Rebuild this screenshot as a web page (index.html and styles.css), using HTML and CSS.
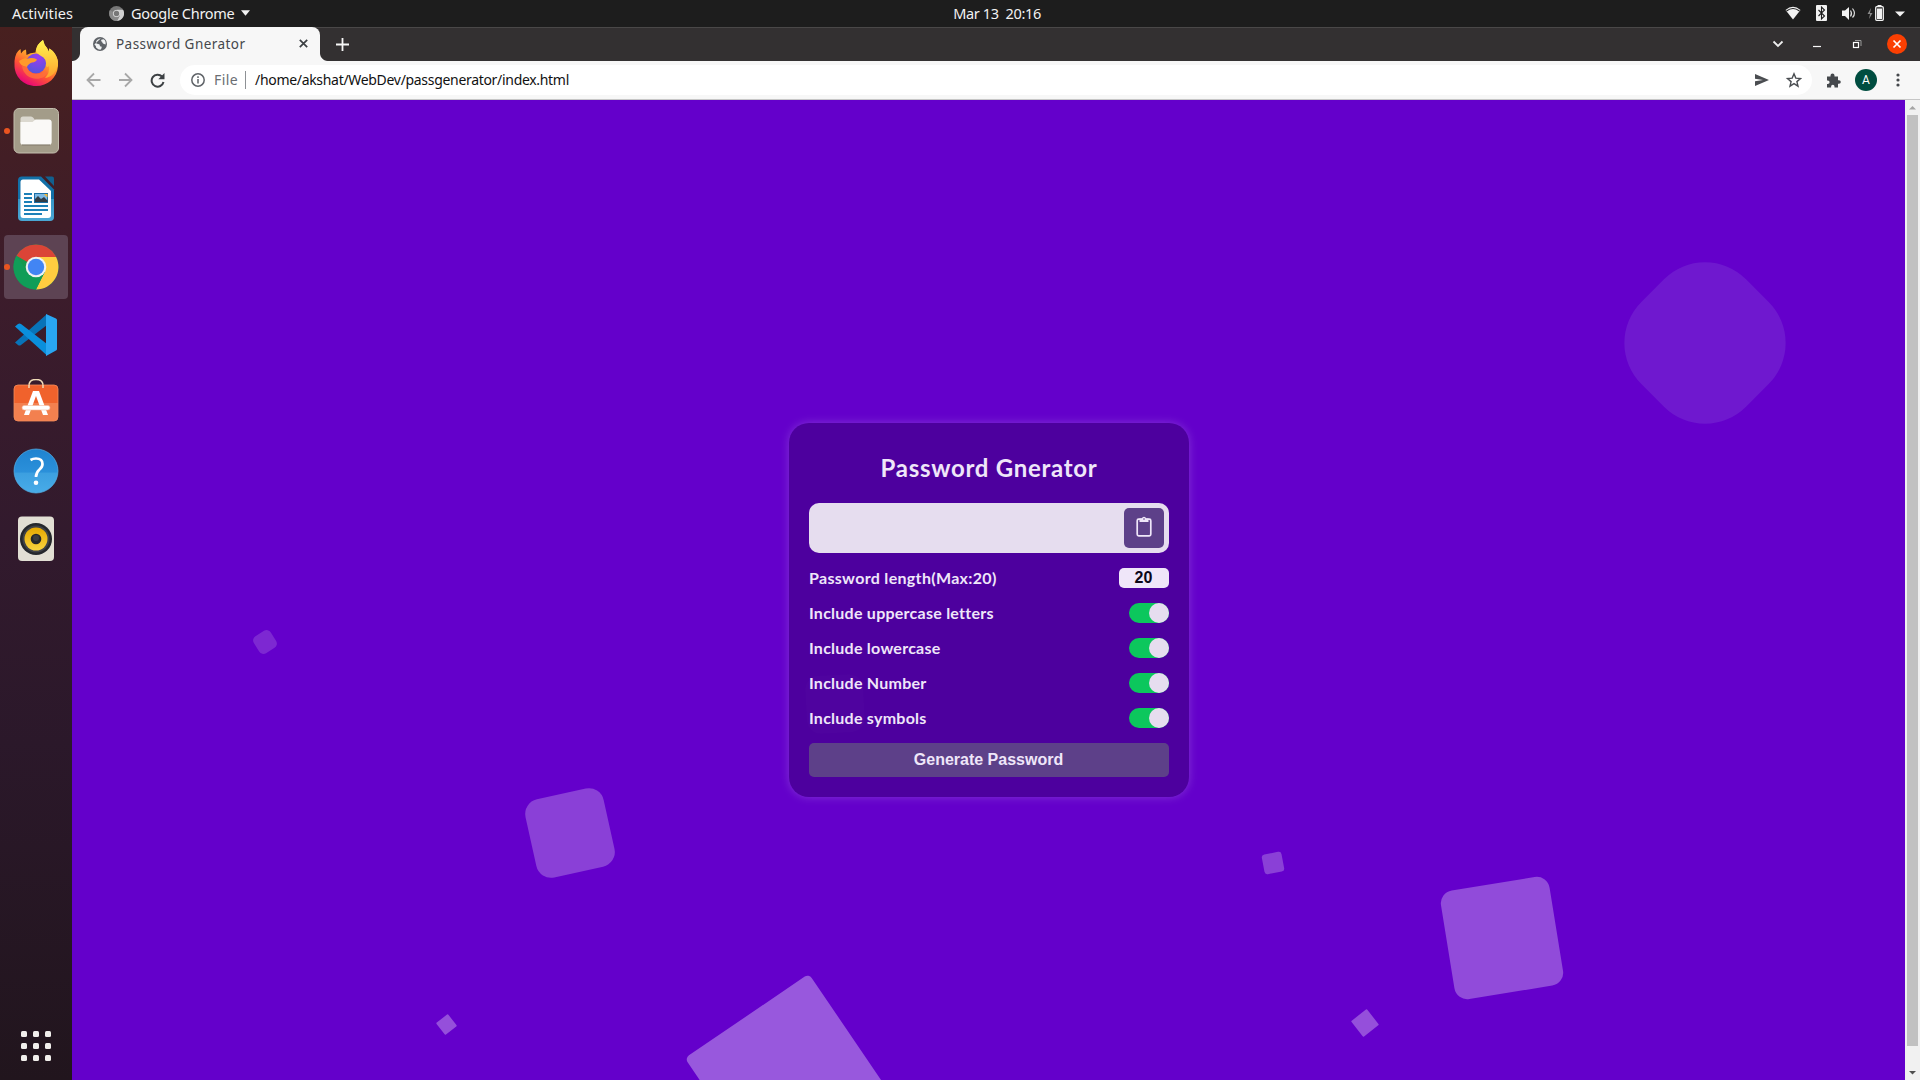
FILE: index.html
```html
<!DOCTYPE html>
<html lang="en">
<head>
<meta charset="utf-8">
<title>Password Gnerator</title>
<link rel="stylesheet" href="styles.css">
</head>
<body>
<header class="topbar">
  <div class="top-left">
    <span class="t-activities">Activities</span>
    <span class="app-menu">
      <svg width="15" height="15" viewBox="0 0 16 16"><circle cx="8" cy="8" r="8" fill="#777"/><path d="M8 4h7A8 8 0 0 1 8.500 16L11.500 10z" fill="#d0d0d0"/><path d="M1 4.500A8 8 0 0 0 8.500 16l3-5.500z" fill="#8a8a8a"/><circle cx="8" cy="8" r="3.800" fill="#ddd"/><circle cx="8" cy="8" r="2.900" fill="#777"/></svg>
      <span class="t-app">Google Chrome</span>
      <svg width="9" height="6" viewBox="0 0 10 6"><path d="M0 0h10L5 6z" fill="#f2f2f2"/></svg>
    </span>
  </div>
  <span class="t-clock">Mar 13&nbsp; 20:16</span>
  <div class="tray">
    <svg width="122" height="20" viewBox="0 0 122 20">
      <path d="M0.500 7Q8 .500 15.500 7L8 16.500z" fill="#f2f2f2"/><path d="M1.500 8Q8 3 14.500 8" fill="none" stroke="#1d1d1d" stroke-width="1.100"/>
      <rect x="31" y="2" width="11" height="16" rx="1" fill="#f2f2f2"/><path d="M33.500 7l6 6-3 3V4l3 3-6 6" fill="none" stroke="#1d1d1d" stroke-width="1.100"/>
      <path d="M57 7.500h3L64 4v13l-4-4h-3z" fill="#f2f2f2"/><path d="M65.500 7.500q2 3 0 6M67.500 5.500q4 5 0 9" fill="none" stroke="#ddd" stroke-width="1.200"/>
      <path d="M86 5l-3.500 6h2.500l-1 5 3.500-6h-2.500z" fill="#888"/>
      <rect x="90.700" y="3.700" width="7.600" height="13.600" rx="1" fill="none" stroke="#f2f2f2" stroke-width="1.300"/><path d="M92.500 2h4v1.500h-4z" fill="#f2f2f2"/><rect x="92" y="5.500" width="5" height="10.500" fill="#f2f2f2"/>
      <path d="M110 8.500h10l-5 5z" fill="#f2f2f2"/>
    </svg>
  </div>
</header>
<div class="desktop">
  <nav class="dock">
    <div class="slot"><svg viewBox="0 0 48 48">
      <defs>
        <linearGradient id="ffa" x1=".8" y1=".1" x2=".3" y2="1"><stop offset="0" stop-color="#fff44f"/><stop offset=".35" stop-color="#ffb02a"/><stop offset=".65" stop-color="#ff5634"/><stop offset="1" stop-color="#e6007c"/></linearGradient>
        <radialGradient id="ffb" cx=".6" cy=".2" r=".9"><stop offset="0" stop-color="#9b3cf0"/><stop offset="1" stop-color="#4b59d8"/></radialGradient>
        <linearGradient id="ffc" x1="0" y1="0" x2="0" y2="1"><stop offset="0" stop-color="#fff44f"/><stop offset="1" stop-color="#ffa22d"/></linearGradient>
      </defs>
      <path d="M2.500 22C3 16 5 12 8.500 10L9 14.500Q11 11 14 10.500L14.500 16Q18 13.500 23.500 13.500C24 8 27 4 31 1Q32 6 35 9L37 13V9.500C42 12 45 17 46 23V27C45 39 36 47 24 47S2 38 2.500 25z" fill="url(#ffa)"/>
      <circle cx="24" cy="24.500" r="10" fill="url(#ffb)"/>
      <path d="M31 1Q32 6 35 9L37 13V9.500C42 12 45 17 46 23C45 33 40 38 33 39Q38 34 37 27Q35 29 34 27Q35 19 29 17Q24 14 24 11Q25 5 31 1z" fill="url(#ffc)"/>
      <path d="M7 22Q13 18 15 20Q20 18 25 20.500Q24 23 20 23.500Q16 25 15 28Q8 27 7 22z" fill="#ff9a2b"/>
      <path d="M15 28C17 36 29 37 33 31Q37 34 32 38C22 43 11 37 10 27z" fill="#ff7139" opacity=".8"/>
    </svg></div>
    <div class="slot running"><svg viewBox="0 0 48 48">
      <rect x="2" y="1.500" width="44.500" height="44.500" rx="5" fill="#a39c89" stroke="#c4beae"/>
      <path d="M8.500 12q0-2.500 2.500-2.500h8q1.500 0 2.500 1.500l1.500 2H37q2.500 0 2.500 2.500v20q0 2.500-2.500 2.500H11q-2.500 0-2.500-2.500z" fill="#dbd8cf"/>
      <path d="M8.500 15h12l3-2.500H37q2.500 0 2.500 2.500v20q0 2.500-2.500 2.500H11q-2.500 0-2.500-2.500z" fill="#faf9f7"/><path d="M10 38h28" stroke="#81796a"/>
    </svg></div>
    <div class="slot"><svg viewBox="0 0 48 48">
      <defs><linearGradient id="wr" x1="0" y1="0" x2="0" y2="1"><stop offset=".5" stop-color="#1270a8"/><stop offset=".5" stop-color="#3595c6"/><stop offset="1" stop-color="#4aa7d4"/></linearGradient></defs>
      <path d="M10 1.500H29L42 14.500V42q0 4-4 4H10q-4 0-4-4V5.500q0-4 4-4z" fill="url(#wr)"/><path d="M33 1.500H40q2 0 2 2V11z" fill="#12608f"/>
      <path d="M11 4.500H27L39 16V40q0 3-3 3H11q-2.500 0-2.500-3V7q0-2.500 2.500-2.500z" fill="#fff"/>
      <path d="M12 19h8M12 23h8M12 27h8M12 31h24M12 35h24M12 39h18" stroke="#1c80b8" stroke-width="2"/>
      <rect x="22.500" y="18.500" width="13" height="9" fill="#7cb9e4" stroke="#1c6fa5"/><path d="M23 27v-3l3-3 3 3 3-2 3.500 3.500V27z" fill="#333d46"/><path d="M32 19h3.500v3.500z" fill="#f6b733"/>
    </svg></div>
    <div class="slot running active"><svg viewBox="0 0 48 48">
      <circle cx="24" cy="24" r="22.500" fill="#14994e"/>
      <path d="M24 24L4.500 12.800A22.500 22.500 0 0 1 43.500 12.800L44 14H24z" fill="#db4437"/>
      <path d="M24 14h20.100A22.500 22.500 0 0 1 24 46.500L32.700 29z" fill="#ffcd40"/>
      <path d="M4.500 12.800A22.500 22.500 0 0 0 24 46.500L32.700 29 15.300 29z" fill="#109d58"/>
      <circle cx="24" cy="24" r="10.300" fill="#f1f1f1"/><circle cx="24" cy="24" r="8.200" fill="#4285f4"/>
    </svg></div>
    <div class="slot"><svg viewBox="0 0 48 48">
      <path d="M3 31.500L6 34q1.500 1 3 0L35 14V3z" fill="#0873b8"/>
      <path d="M3 15.500L6 13q1.500-1 3 0L35 33V44.500z" fill="#0a8fdc"/>
      <path d="M34 3l10 4.500q1 .500 1 1.500v29q0 1-1 1.500L34 45z" fill="#29a6f2"/>
    </svg></div>
    <div class="slot"><svg viewBox="0 0 48 48">
      <defs><linearGradient id="sw" x1="0" y1="0" x2="0" y2="1"><stop offset=".5" stop-color="#f0622c"/><stop offset=".5" stop-color="#f3804f"/></linearGradient></defs>
      <path d="M17 9V6.500q0-6 7-6t7 6V9" fill="none" stroke="#f0dcb8" stroke-width="1.500"/>
      <rect x="2" y="6" width="44" height="36" rx="4" fill="url(#sw)" stroke="#f58d5c" stroke-width=".8"/>
      <path d="M17 9V6" stroke="#f0dcb8" stroke-width="1.500"/><path d="M31 9V6" stroke="#f0dcb8" stroke-width="1.500"/>
      <path d="M21 12h6l9 24h-5l-7-19-7 19h-5z" fill="#fff"/><rect x="10" y="26.500" width="28" height="4.500" rx="2.200" fill="#fff" stroke="#f3b69b" stroke-width=".6"/>
    </svg></div>
    <div class="slot"><svg viewBox="0 0 48 48">
      <defs><linearGradient id="hp" x1="0" y1="0" x2="0" y2="1"><stop offset="0" stop-color="#1f83d0"/><stop offset=".53" stop-color="#2b90da"/><stop offset=".54" stop-color="#3c9fe0"/><stop offset="1" stop-color="#48ace8"/></linearGradient></defs>
      <circle cx="24" cy="24" r="22" fill="url(#hp)" stroke="#55b2ea" stroke-width=".7"/>
      <path d="M18.500 13Q21 11.500 24 11.500Q30.500 11.500 30.500 17Q30.500 20 27.500 22.500Q24 25.500 24 30" fill="none" stroke="#fff" stroke-width="2.700"/><circle cx="24" cy="35.700" r="2.300" fill="#fff"/>
    </svg></div>
    <div class="slot"><svg viewBox="0 0 48 48">
      <defs><linearGradient id="rb" x1="0" y1="0" x2="0" y2="1"><stop offset="0" stop-color="#e5a800"/><stop offset="1" stop-color="#f8d33e"/></linearGradient></defs>
      <rect x="6" y="1.500" width="36" height="44.500" rx="4" fill="#e2dfd4"/>
      <circle cx="24" cy="24" r="16" fill="#25282c"/><circle cx="24" cy="24" r="13.500" fill="#3f4247"/><circle cx="24" cy="24" r="11.500" fill="url(#rb)"/><circle cx="24" cy="24" r="5.300" fill="#26282a"/><circle cx="24" cy="23" r="3" fill="#3b3d40"/>
    </svg></div>
    <div class="apps"><i></i><i></i><i></i><i></i><i></i><i></i><i></i><i></i><i></i></div>
  </nav>
  <main class="window">
    <div class="tabstrip">
      <div class="tab">
        <svg class="globe" width="14" height="14" viewBox="0 0 16 16"><circle cx="8" cy="8" r="8" fill="#5f6368"/><path d="M9 1.500Q4 3 3.500 5.500 3 8 6 8q2 0 2 2.500l2 .5q0 2-1.500 3.500Q6 14.500 3.500 12 4 10 1.600 8.500 M9.500 3Q8.500 5 10.500 5.500q0 2.500 3.900 3Q15 4 12 2.500z" fill="#f1f3f4"/></svg>
        <span class="t-tab">Password Gnerator</span>
        <svg class="tab-x" width="9" height="9" viewBox="0 0 9 9"><path d="M.8.800l7.400 7.400M8.200.800L.8 8.200" stroke="#3c4043" stroke-width="1.700"/></svg>
      </div>
      <svg class="plus" width="13" height="13" viewBox="0 0 13 13"><path d="M6.500 0v13M0 6.500h13" stroke="#f7f7f7" stroke-width="1.800"/></svg>
      <div class="wincontrols">
        <svg width="140" height="24" viewBox="0 0 140 24">
          <path d="M4.500 9.500l4.500 4.500 4.500-4.500" fill="none" stroke="#eee" stroke-width="1.800"/>
          <path d="M44 14.500h8" stroke="#f7f7f7" stroke-width="1.200"/>
          <rect x="84.500" y="10.500" width="5" height="5" fill="none" stroke="#fff" stroke-width="1.200"/><path d="M86 8.500h6V14" fill="none" stroke="#9b9b9b"/>
          <circle cx="128" cy="12" r="10" fill="#fb3f02"/><path d="M124.500 8.500l7 7M131.500 8.500l-7 7" stroke="#fff" stroke-width="1.700"/>
        </svg>
      </div>
    </div>
    <div class="toolbar">
      <svg class="navs" width="80" height="16" viewBox="0 0 80 16"><g fill="none" stroke="#a8a8a8" stroke-width="1.800"><path d="M14.500 8H2M8 1.500L1.500 8 8 14.500"/><path d="M33 8h12.500M39 1.500L45.500 8 39 14.500"/></g><path d="M76 4.500A6 6 0 1 0 77.500 10" fill="none" stroke="#3c4043" stroke-width="2"/><path d="M78.500 1v6.200h-6.200z" fill="#3c4043"/></svg>
      <div class="omnibox">
        <svg width="14" height="14" viewBox="0 0 14 14"><circle cx="7" cy="7" r="6.200" fill="none" stroke="#5f6368" stroke-width="1.500"/><path d="M7 6v4.500M7 3.300v1.600" stroke="#5f6368" stroke-width="1.500"/></svg>
        <span class="t-file">File</span><i class="sep"></i><span class="t-url">/home/akshat/WebDev/passgenerator/index.html</span>
        <svg class="omni-icons" width="48" height="16" viewBox="0 0 48 16"><path d="M1 2l14 6-14 6V9.200L9 8 1 6.800z" fill="#4a4d51"/><path d="M40 1.800l1.800 4.300 4.700.4-3.600 3.100 1.100 4.600-4-2.500-4 2.500 1.100-4.600-3.600-3.100 4.700-.4z" fill="none" stroke="#4a4d51" stroke-width="1.400"/></svg>
      </div>
      <svg class="ext" width="15" height="15" viewBox="0 0 15 15"><path d="M1 3.500h3.500v-1a2 2 0 0 1 4 0v1H12v3.700h1a1.800 1.800 0 0 1 0 3.600h-1V14.500H8.500v-1a1.700 1.700 0 0 0-3.400 0v1H1V11h.8a1.800 1.800 0 0 0 0-3.600H1z" fill="#45484c"/></svg>
      <span class="avatar">A</span>
      <svg class="dots" width="4" height="14" viewBox="0 0 4 14"><g fill="#45484c"><circle cx="2" cy="2" r="1.600"/><circle cx="2" cy="7" r="1.600"/><circle cx="2" cy="12" r="1.600"/></g></svg>
    </div>
    <div class="viewport">
      <div class="page">
        <i class="sq s1"></i><i class="sq s2"></i><i class="sq s3"></i><i class="sq s4"></i><i class="sq s5"></i><i class="sq s6"></i><i class="sq s7"></i><i class="sq s8"></i>
        <section class="card">
          <h1><span>Password Gnerator</span></h1>
          <div class="display"><button class="copy"><svg width="16" height="21" viewBox="0 0 16 21"><rect x="1.200" y="3.200" width="13.600" height="16.600" rx="1.500" fill="none" stroke="#efe6f9" stroke-width="1.700"/><path d="M3.500 2.500h2.300a2.300 2.300 0 0 1 4.400 0h2.300V6h-9z" fill="#efe6f9"/><circle cx="8" cy="3" r=".8" fill="#5d4089"/></svg></button></div>
          <div class="row"><span class="l1">Password length(Max:20)</span><span class="num">20</span></div>
          <div class="row"><span>Include uppercase letters</span><i class="toggle"></i></div>
          <div class="row"><span>Include lowercase</span><i class="toggle"></i></div>
          <div class="row"><span>Include Number</span><i class="toggle"></i></div>
          <div class="row"><span>Include symbols</span><i class="toggle"></i></div>
          <button class="generate">Generate Password</button>
          <i class="sq s9"></i>
        </section>
      </div>
      <div class="scrollbar">
        <svg width="15" height="15" viewBox="0 0 15 15"><path d="M4 9.500h7L7.500 6z" fill="#a3a3a3"/></svg>
        <i class="thumb"></i>
        <svg width="15" height="15" viewBox="0 0 15 15"><path d="M4 6h7L7.500 9.500z" fill="#505050"/></svg>
      </div>
    </div>
  </main>
</div>
</body>
</html>
```
FILE: styles.css
```css
* { box-sizing: border-box; }
body { margin: 0; width: 1920px; height: 1080px; overflow: hidden; display: flex; flex-direction: column; font-family: "Noto Sans", "Open Sans", sans-serif; }
svg { display: block; flex: none; }
i { display: block; flex: none; }

.topbar { height: 27px; flex: none; background: #1d1d1d; color: #f2f2f2; display: grid; grid-template-columns: 1fr auto 1fr; align-items: center; font-size: 14.5px; line-height: 25px; padding: 0 13px 1px 12px; white-space: nowrap; }
.top-left { display: flex; gap: 35px; }
.t-activities { width: 62px; letter-spacing: .05px; }
.app-menu { display: flex; align-items: center; gap: 7px; }
.t-app { width: 103px; letter-spacing: -.27px; }
.t-clock { letter-spacing: -.35px; margin-left: 75px; }
.tray { display: flex; justify-content: flex-end; }

.desktop { flex: 1; display: flex; min-height: 0; }
.dock { width: 72px; flex: none; padding-top: 2px; background: linear-gradient(#48201f, #3c1c2b 25%, #321a2d 48%, #2b182a 68%, #21151d); display: flex; flex-direction: column; align-items: center; }
.slot { width: 64px; height: 64px; margin: 2px 0; border-radius: 4px; display: flex; align-items: center; justify-content: center; position: relative; flex: none; }
.slot svg { width: 48px; height: 48px; }
.active { background: #5d4353; }
.running::before { content: ""; position: absolute; left: 0; top: 29px; width: 6px; height: 6px; border-radius: 50%; background: #e95420; }
.apps { margin-top: auto; margin-bottom: 19px; display: grid; grid-template-columns: repeat(3, 6px); gap: 6px; }
.apps i { width: 6px; height: 6px; border-radius: 1.5px; background: #f1efec; }

.window { flex: 1; display: flex; flex-direction: column; min-width: 0; }
.tabstrip { height: 34px; flex: none; background: #333031; border-top: 1px solid #4a4848; display: flex; align-items: center; padding: 0 12px 1px 8px; }
.tab { width: 240px; height: 34px; background: #f7f7f7; border-radius: 8px 8px 0 0; display: flex; align-items: center; padding: 0 12px 1px 13px; position: relative; }
.tab::before, .tab::after { content: ""; position: absolute; bottom: 0; width: 8px; height: 8px; }
.tab::before { left: -8px; background: radial-gradient(circle at 0 0, #333031 7.5px, #f7f7f7 8.5px); }
.tab::after { right: -8px; background: radial-gradient(circle at 100% 0, #333031 7.500px, #f7f7f7 8.500px); }
.t-tab { flex: 1; margin-left: 9px; font-size: 13.5px; color: #45484c; white-space: nowrap; letter-spacing: .45px; }
.plus { margin-left: 16px; }
.wincontrols { margin-left: auto; margin-right: -1px; }
.toolbar { height: 39px; flex: none; background: #f7f7f7; border-bottom: 1px solid #c6c6c6; display: flex; align-items: center; }
.navs { margin-left: 14px; }
.omnibox { width: 1632px; height: 30px; margin-left: 14px; background: #fff; border-radius: 15px; display: flex; align-items: center; padding: 0 10px 0 11px; font-size: 14px; line-height: 28px; white-space: nowrap; }
.t-file { margin-left: 9px; width: 24px; color: #6b6e73; letter-spacing: .4px; }
.sep { width: 1px; height: 18px; margin: 0 9px 0 7px; background: #8e9195; }
.t-url { color: #111; letter-spacing: -.31px; }
.omni-icons { margin-left: auto; }
.ext { margin-left: 14px; }
.avatar { width: 22px; height: 22px; margin-left: 14px; border-radius: 50%; background: #004d40; color: #fff; font: 12px/22px Roboto, sans-serif; text-align: center; }
.dots { margin-left: 19px; }

.viewport { flex: 1; display: flex; min-height: 0; }
.page { flex: 1; background: #6400cb; position: relative; overflow: hidden; display: flex; justify-content: center; align-items: flex-start; padding-top: 323px; }
.scrollbar { width: 15px; background: #f1f1f1; display: flex; flex-direction: column; align-items: center; }
.thumb { width: 11px; height: 931px; background: #c1c1c1; margin-bottom: auto; }

.sq { position: absolute; width: var(--s); height: var(--s); left: calc(var(--x) - var(--s) / 2); top: calc(var(--y) - var(--s) / 2); border-radius: var(--r); transform: rotate(var(--a)); }
.s1 { --s: 80px; --x: 498px; --y: 732.8px; --r: 15px; --a: -12.5deg; background: #8a40d7; }
.s2 { --s: 150px; --x: 717px; --y: 978px; --r: 5px; --a: -34.2deg; background: #9858dd; }
.s3 { --s: 20px; --x: 1201px; --y: 762.6px; --r: 3px; --a: -10.7deg; background: #8a40d7; }
.s4 { --s: 110px; --x: 1430.2px; --y: 837.5px; --r: 13px; --a: -9.2deg; background: #914bda; }
.s5 { --s: 20px; --x: 1293px; --y: 922.7px; --r: 1px; --a: -38deg; background: #954fdb; }
.s6 { --s: 15px; --x: 374.7px; --y: 924.3px; --r: 1px; --a: -38deg; background: #954fdb; }
.s7 { --s: 20px; --x: 193px; --y: 542.3px; --r: 5px; --a: -32deg; background: #7d28d2; }
.s8 { --s: 148px; --x: 1633px; --y: 243px; --r: 58px; --a: 45deg; background: #6f18cf; }
.s9 { --s: 58px; --x: 45.500px; --y: 280.500px; --r: 14px; --a: -3deg; background: rgba(255,255,255,.012); }

.card { width: 400px; height: 374px; padding: 20px; border-radius: 20px; background: #4d009e; color: #efe6f9; box-shadow: 0 0 10px rgba(255,255,255,.2); position: relative; margin-left: 1px; font-family: Lato, sans-serif; display: flex; flex-direction: column; }
h1 { margin: 0; height: 60px; padding-top: 10px; font-size: 24px; line-height: 30px; font-weight: 700; letter-spacing: .72px; text-align: center; }
.display { height: 50px; flex: none; background: #e6ddef; border-radius: 10px; padding: 5px; display: flex; justify-content: flex-end; margin-bottom: 7px; }
button { border: 0; border-radius: 5px; background: #5d4089; padding: 0; display: flex; justify-content: center; }
.copy { width: 40px; height: 40px; padding-top: 8px; padding-right: 1px; }
.row { height: 35px; display: flex; align-items: center; justify-content: space-between; font-size: 16px; font-weight: 700; letter-spacing: .25px; white-space: nowrap; }
.l1 { letter-spacing: .32px; }
.num { width: 50px; height: 20px; border-radius: 5px; background: #efe6f9; color: #0c0618; font: bold 16px/20px "Liberation Sans", sans-serif; letter-spacing: 0; text-align: center; padding-right: 1px; }
.toggle { width: 40px; height: 20px; border-radius: 10px; background: #0cc75d; display: flex; justify-content: flex-end; }
.toggle::after { content: ""; width: 20px; height: 20px; border-radius: 50%; background: #e6ddef; }
.generate { height: 34px; margin-top: 8px; padding-right: 1px; color: #efe6f9; font: bold 16px/34px "Liberation Sans", sans-serif; }
```
